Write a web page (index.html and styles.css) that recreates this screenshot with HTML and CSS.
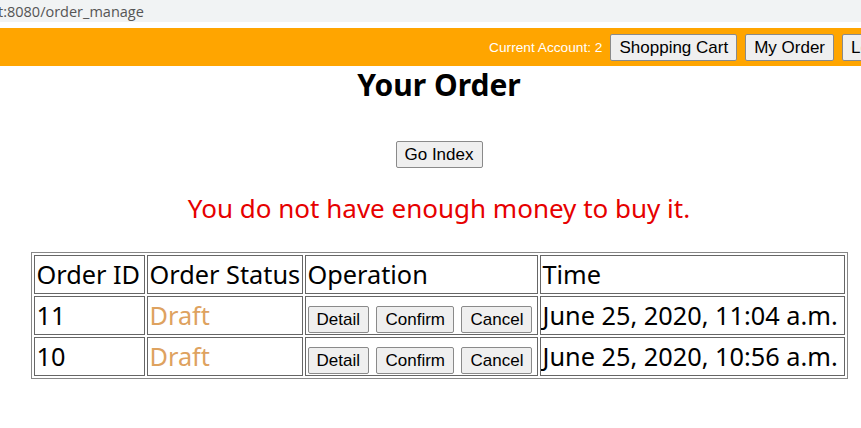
FILE: index.html
```html
<!DOCTYPE html>
<html lang="en">
<head>
<meta charset="utf-8">
<title>Your Order</title>
<link rel="stylesheet" href="styles.css">
</head>
<body>
<div class="urlbar"><span class="url">t:8080/order_manage</span></div>
<div class="page">
  <header class="topbar">
    <span class="account">Current Account: 2</span>
    <button class="btn">Shopping Cart</button>
    <button class="btn">My Order</button>
    <button class="btn">Logout</button>
  </header>
  <main class="content">
    <h1 class="title">Your Order</h1>
    <div class="actions"><button class="btn">Go Index</button></div>
    <p class="error">You do not have enough money to buy it.</p>
    <table class="orders">
      <colgroup>
        <col class="c-id"><col class="c-status"><col class="c-op"><col class="c-time">
      </colgroup>
      <tr>
        <td>Order ID</td><td>Order Status</td><td>Operation</td><td>Time</td>
      </tr>
      <tr>
        <td>11</td><td class="status">Draft</td>
        <td class="ops"><button class="btn">Detail</button><button class="btn">Confirm</button><button class="btn">Cancel</button></td>
        <td>June 25, 2020, 11:04 a.m.</td>
      </tr>
      <tr>
        <td>10</td><td class="status">Draft</td>
        <td class="ops"><button class="btn">Detail</button><button class="btn">Confirm</button><button class="btn">Cancel</button></td>
        <td>June 25, 2020, 10:56 a.m.</td>
      </tr>
    </table>
  </main>
</div>
</body>
</html>
```

FILE: styles.css
```css
html, body {
  margin: 0;
  padding: 0;
  background: #fff;
  overflow: hidden;
}
body {
  font-family: "Noto Sans", "Open Sans", sans-serif;
  color: #000;
}
.urlbar {
  height: 22px;
  background: #f1f3f4;
  border-bottom: 6px solid #fff;
  display: flex;
  align-items: center;
  overflow: hidden;
}
.url {
  margin-left: -2px;
  font-family: "Open Sans", "Noto Sans", sans-serif;
  font-size: 14.5px;
  color: #555;
  white-space: nowrap;
}
.page {
  width: 930px;
}
.topbar {
  height: 38px;
  background: #ffa500;
  display: flex;
  align-items: center;
  justify-content: flex-end;
  gap: 8px;
  padding-right: 18px;
  padding-top: 1px;
  box-sizing: border-box;
}
.account {
  color: #fff;
  font-family: "Liberation Sans", Arial, sans-serif;
  font-size: 13.7px;
}
.btn {
  font-family: "Liberation Sans", Arial, sans-serif;
  font-size: 17px;
  line-height: 19px;
  padding: 3px 8px;
  background: #efefef;
  color: #000;
  border: 1px solid #8a8a8a;
  border-radius: 2px;
  margin: 0;
}
.content {
  width: 878px;
  text-align: center;
}
.title {
  margin: 0;
  font-size: 30px;
  line-height: 38px;
  font-weight: 700;
}
.actions {
  margin-top: 37px;
}
.error {
  margin: 23px 0 0;
  color: #e60000;
  font-size: 26px;
  line-height: 35px;
}
.orders {
  margin: 26px auto 0;
  table-layout: fixed;
  border-collapse: separate;
  border-spacing: 2px;
  border: 1px solid #888;
  text-align: left;
  width: 817px;
}
.c-id { width: 111px; }
.c-status { width: 156px; }
.c-op { width: 233px; }
.c-time { width: 305px; }
.orders td {
  border: 1px solid #666;
  padding: 1px 2px;
  font-size: 25.3px;
  line-height: 35px;
  white-space: nowrap;
  overflow: hidden;
}
.orders .status {
  color: #dea25f;
}
.ops .btn {
  font-size: 17px;
  margin-right: 7.5px;
}
.ops .btn:last-child {
  margin-right: 0;
}
```
